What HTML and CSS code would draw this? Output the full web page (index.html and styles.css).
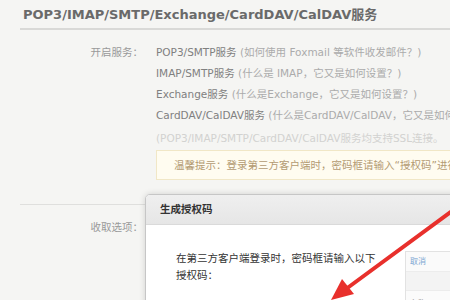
FILE: index.html
```html
<!DOCTYPE html>
<html lang="zh-CN">
<head>
    <meta charset="UTF-8">
    <meta name="viewport" content="width=device-width, initial-scale=1.0">
    <title>POP3/IMAP/SMTP/Exchange/CardDAV/CalDAV服务</title>
    <link rel="stylesheet" href="styles.css">
</head>
<body>
    <div class="page">
        <!-- Section title -->
        <div class="title">POP3/IMAP/SMTP/Exchange/CardDAV/CalDAV服务</div>

        <!-- Service switches -->
        <div class="row services">
            <div class="label">开启服务：</div>
            <div class="values">
                <div class="item">POP3/SMTP服务 <span class="hint">(如何使用 Foxmail 等软件收发邮件？)</span></div>
                <div class="item">IMAP/SMTP服务 <span class="hint">(什么是 IMAP，它又是如何设置？)</span></div>
                <div class="item">Exchange服务 <span class="hint">(什么是Exchange，它又是如何设置？)</span></div>
                <div class="item">CardDAV/CalDAV服务 <span class="hint">(什么是CardDAV/CalDAV，它又是如何设置？)</span></div>
                <div class="note">(POP3/IMAP/SMTP/CardDAV/CalDAV服务均支持SSL连接。</div>
                <div class="tip">温馨提示：登录第三方客户端时，密码框请输入“授权码”进行验证。</div>
            </div>
        </div>

        <div class="divider"></div>

        <div class="row options">
            <div class="label">收取选项：</div>
        </div>
    </div>

    <!-- Dialog: generate auth code -->
    <div class="dialog">
        <div class="dialog-header">生成授权码</div>
        <div class="dialog-body">
            <div class="dialog-text">在第三方客户端登录时，密码框请输入以下<br>授权码：</div>
            <div class="mini-panel">
                <div class="mini-head">取消</div>
                <div class="mini-row"></div>
                <div class="mini-row last">名称</div>
            </div>
        </div>
    </div>

    <!-- Red pointer arrow -->
    <svg class="arrow" width="450" height="300" viewBox="0 0 450 300">
        <line x1="456" y1="208" x2="346" y2="289" stroke="#e8302c" stroke-width="4" stroke-linecap="round"/>
        <polygon points="331,300 354,294 342,279" fill="#e8302c"/>
    </svg>
</body>
</html>
```

FILE: styles.css
```css
body {
    margin: 0;
    width: 450px;
    height: 300px;
    overflow: hidden;
    background-color: #f5f5f3;
    font-family: "DejaVu Sans", "Noto Sans CJK SC", sans-serif;
    position: relative;
}

.page {
    padding: 7px 0 0 20px;
}

.title {
    font-size: 13px;
    font-weight: bold;
    line-height: 16px;
    color: #6a6a6a;
    padding: 0 0 5px 3px;
    border-bottom: 2px solid #d9d9d7;
    white-space: nowrap;
}

.row {
    display: flex;
    font-size: 10.5px;
}

.label {
    width: 123px;
    padding-right: 13px;
    flex-shrink: 0;
    text-align: right;
    line-height: 21px;
    color: #999;
}

.services {
    margin-top: 12px;
}

.values {
    flex: 1;
    min-width: 0;
    white-space: nowrap;
}

.item {
    line-height: 21px;
    color: #808080;
}

.hint {
    color: #ababab;
}

.note {
    line-height: 21px;
    margin-top: 2px;
    color: #d2d2d0;
}

.tip {
    margin-top: 1px;
    margin-right: -30px;
    height: 28px;
    line-height: 28px;
    padding-left: 17px;
    background-color: #fffcf0;
    border: 1px solid #f1e7c6;
    color: #b39a72;
    overflow: hidden;
}

.divider {
    margin-top: 24px;
    height: 1px;
    background-color: #dfdfdd;
}

.options {
    padding-top: 12px;
}

.dialog {
    position: absolute;
    left: 145px;
    top: 194px;
    width: 340px;
    height: 150px;
    background-color: #fff;
    border: 1px solid #c6c6c6;
    border-radius: 5px 5px 0 0;
    box-shadow: 0 0 6px rgba(0, 0, 0, 0.15);
    overflow: hidden;
}

.dialog-header {
    height: 29px;
    line-height: 29px;
    padding-left: 14px;
    font-size: 10.5px;
    font-weight: bold;
    color: #333;
    background: linear-gradient(#efefef, #e6e6e6);
    border-bottom: 1px solid #dadada;
}

.dialog-body {
    display: flex;
    align-items: flex-start;
    padding: 25px 0 0 30px;
}

.dialog-text {
    width: 232px;
    font-size: 10.5px;
    line-height: 16.5px;
    color: #333;
}

.mini-panel {
    width: 80px;
    margin-top: 1px;
    border: 1px solid #e2e2e2;
    background-color: #fafafa;
    font-size: 8px;
}

.mini-head {
    height: 19px;
    line-height: 19px;
    padding-left: 4px;
    color: #7ea6d2;
    border-bottom: 1px solid #ececec;
}

.mini-row {
    height: 18px;
    border-bottom: 1px solid #ececec;
    background-color: #f3f3f3;
}

.mini-row.last {
    height: 22px;
    line-height: 26px;
    padding-left: 4px;
    color: #999;
    background-color: #fbfbfb;
    border-bottom: none;
}

.arrow {
    position: absolute;
    left: 0;
    top: 0;
    pointer-events: none;
}
```
